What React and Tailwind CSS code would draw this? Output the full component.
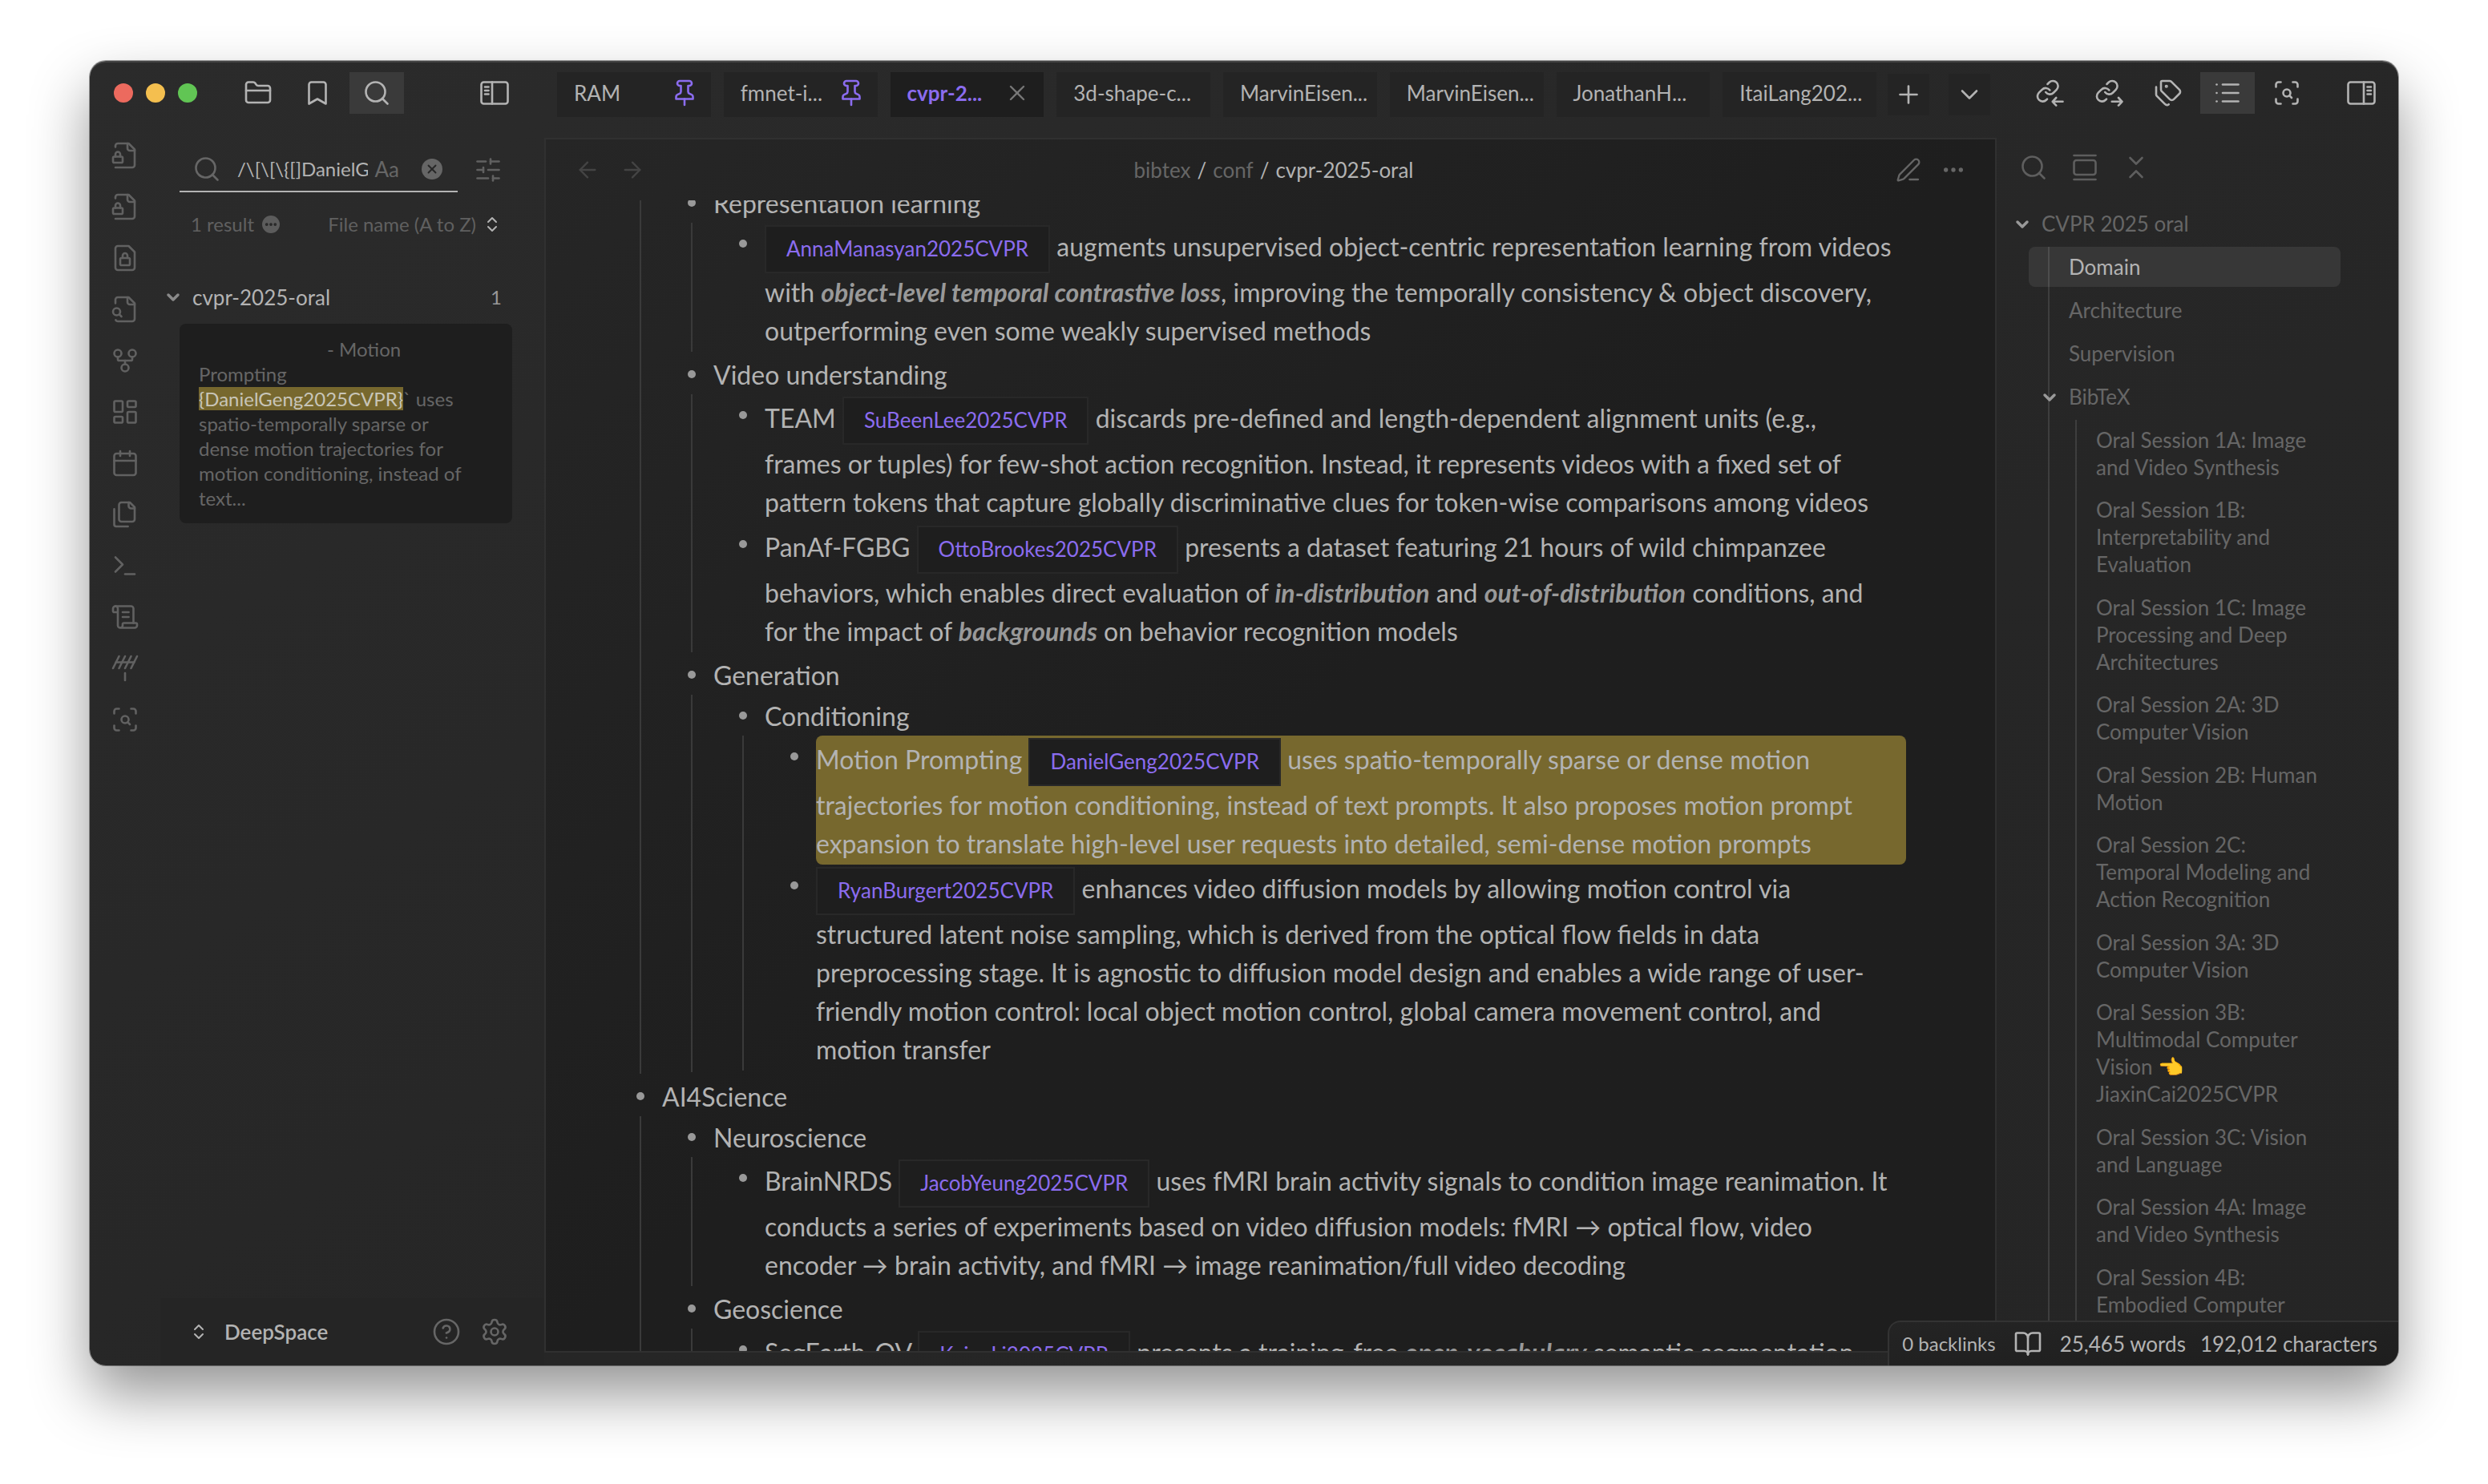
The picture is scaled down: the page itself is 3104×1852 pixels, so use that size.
import React from "react";
import {
  Antenna,
  ArrowLeft,
  ArrowRight,
  BookOpen,
  Calendar,
  ChevronDown,
  ChevronsDownUp,
  ChevronsUpDown,
  CircleQuestionMark,
  Ellipsis,
  FolderClosed,
  GalleryVertical,
  GitFork,
  LayoutDashboard,
  List,
  PenLine,
  Plus,
  ScanSearch,
  ScrollText,
  Search,
  Settings,
  SlidersHorizontal,
  Tags,
  Terminal,
  X,
} from "lucide-react";

function Glyph({ className = "size-9", children }) {
  return (
    <svg
      viewBox="0 0 24 24"
      fill="none"
      stroke="currentColor"
      strokeWidth="1.75"
      strokeLinecap="round"
      strokeLinejoin="round"
      className={className}
      aria-hidden="true"
    >
      {children}
    </svg>
  );
}

const FileLockCorner = () => (
  <Glyph>
    <path d="M4 5V4a2 2 0 0 1 2-2h9l5 5v13a2 2 0 0 1-2 2H4" />
    <path d="M14 2v4a2 2 0 0 0 2 2h4" />
    <rect width="8" height="5" x="2" y="13" rx="1" />
    <path d="M8 13v-2a2 2 0 1 0-4 0v2" />
  </Glyph>
);

const FileLockCenter = () => (
  <Glyph>
    <path d="M15 2H6a2 2 0 0 0-2 2v16a2 2 0 0 0 2 2h12a2 2 0 0 0 2-2V7Z" />
    <rect width="8" height="6" x="8" y="12" rx="1" />
    <path d="M10 12v-2a2 2 0 1 1 4 0v2" />
  </Glyph>
);

const FileSearchCorner = () => (
  <Glyph>
    <path d="M14 2v4a2 2 0 0 0 2 2h4" />
    <path d="M4.268 21a2 2 0 0 0 1.727 1H18a2 2 0 0 0 2-2V7l-5-5H6a2 2 0 0 0-2 2v3" />
    <path d="m9 18-1.5-1.5" />
    <circle cx="5" cy="14" r="3" />
  </Glyph>
);

const FilesStack = () => (
  <Glyph>
    <path d="M20 7h-3a2 2 0 0 1-2-2V2" />
    <path d="M9 18a2 2 0 0 1-2-2V4a2 2 0 0 1 2-2h7l4 4v10a2 2 0 0 1-2 2Z" />
    <path d="M3 7.6v12.8A1.6 1.6 0 0 0 4.6 22h9.8" />
  </Glyph>
);

const BookmarkFlag = () => (
  <Glyph>
    <path d="m19 21-7-4-7 4V5a2 2 0 0 1 2-2h10a2 2 0 0 1 2 2v16z" />
  </Glyph>
);

const PinMark = () => (
  <Glyph>
    <path d="M12 17v5" />
    <path d="M5 17h14v-1.76a2 2 0 0 0-1.11-1.79l-1.78-.9A2 2 0 0 1 15 10.76V6h1a2 2 0 0 0 0-4H8a2 2 0 0 0 0 4h1v4.76a2 2 0 0 1-1.11 1.79l-1.78.9A2 2 0 0 0 5 15.24Z" />
  </Glyph>
);

const SidebarMark = ({ right = false }) => (
  <Glyph className={right ? "size-9 -scale-x-100" : "size-9"}>
    <rect x="1" y="3" width="22" height="18" rx="2" />
    <path d="M10 3v18M4 7h3M4 10h3M4 13h3" />
  </Glyph>
);

const LinkMark = ({ out = false }) => (
  <Glyph>
    <g transform="translate(.2 .2) scale(.86)" strokeWidth="2">
      <path d="M10 13a5 5 0 0 0 7.54.54l3-3a5 5 0 0 0-7.07-7.07l-1.72 1.71" />
      <path d="M14 11a5 5 0 0 0-7.54-.54l-3 3a5 5 0 0 0 7.07 7.07l.9-.9" />
    </g>
    {out ? <path d="M14.5 19.2H23M20 16l3 3.2-3 3.2" /> : <path d="M14.5 19.2H23M17.5 16l-3 3.2 3 3.2" />}
  </Glyph>
);

const icon = { className: "size-9", strokeWidth: 1.75 };

function IconButton({ label, active = false, className = "", children }) {
  return (
    <button
      type="button"
      aria-label={label}
      className={`flex h-[52px] w-[68px] shrink-0 items-center justify-center ${active ? "bg-[#3a3a3a]" : ""} ${className}`}
    >
      {children}
    </button>
  );
}

/* ---------- left side ---------- */

const ribbon = [
  ["Encrypt note", FileLockCorner],
  ["Decrypt note", FileLockCorner],
  ["Lock file", FileLockCenter],
  ["Quick switcher", FileSearchCorner],
  ["Graph view", () => <GitFork {...icon} />],
  ["Canvas", () => <LayoutDashboard {...icon} />],
  ["Daily note", () => <Calendar {...icon} />],
  ["Templates", FilesStack],
  ["Command palette", () => <Terminal {...icon} />],
  ["Bibliography", () => <ScrollText {...icon} />],
  ["Publish", () => <Antenna {...icon} />],
  ["Scan", () => <ScanSearch {...icon} />],
];

function LeftSide() {
  return (
    <aside className="flex w-[567px] shrink-0 flex-col">
      <div className="flex h-[96px] shrink-0 items-start pt-[14px] pr-[44px] pl-[30px]">
        <div className="flex h-[52px] items-center gap-4">
          <span className="size-6 rounded-full bg-[#ec6a5e]" />
          <span className="size-6 rounded-full bg-[#f4bf4f]" />
          <span className="size-6 rounded-full bg-[#61c554]" />
        </div>
        <div className="ml-[42px] flex gap-[6px]">
          <IconButton label="Files"><FolderClosed {...icon} /></IconButton>
          <IconButton label="Bookmarks"><BookmarkFlag /></IconButton>
          <IconButton label="Search" active><Search {...icon} /></IconButton>
        </div>
        <button type="button" aria-label="Collapse left sidebar" className="ml-auto flex h-[52px] items-center">
          <SidebarMark />
        </button>
      </div>

      <div className="flex min-h-0 flex-1">
        <nav className="flex w-[88px] shrink-0 flex-col items-center gap-7 pt-1 text-[#616161]">
          {ribbon.map(([label, Icon], i) => (
            <button key={i} type="button" aria-label={label}><Icon /></button>
          ))}
        </nav>

        <div className="flex min-w-0 flex-1 flex-col">
          <div className="flex items-center gap-5 pt-3 pr-[52px] pl-6">
            <label className="flex h-14 min-w-0 flex-1 items-center border-b-2 border-[#b3b3b3] pr-[19px] pl-4">
              <Search className="size-9 shrink-0 text-[#666]" strokeWidth={1.75} />
              <input
                aria-label="Search notes"
                defaultValue={"/\\[\\[\\{[]DanielGeng2025CVPR"}
                className="ml-5 min-w-0 flex-1 bg-transparent text-2xl outline-none"
              />
              <span className="ml-2 text-[26px] leading-[34px] text-[#666]">Aa</span>
              <button type="button" aria-label="Clear search" className="ml-7 flex size-[26px] shrink-0 items-center justify-center rounded-full bg-[#666] text-[#282828]">
                <X className="size-[18px]" strokeWidth={2.5} />
              </button>
            </label>
            <button type="button" aria-label="Search settings" className="text-[#616161]"><SlidersHorizontal {...icon} /></button>
          </div>

          <div className="mt-6 flex h-8 items-center pr-[53px] pl-[38px] text-2xl text-[#606060]">
            <span>1 result</span>
            <span className="ml-[10px] flex size-[22px] items-center justify-center rounded-full bg-[#5c5c5c] text-[#262626]">
              <Ellipsis className="size-[18px]" strokeWidth={3} />
            </span>
            <button type="button" className="ml-auto flex items-center gap-2">
              File name (A to Z)
              <ChevronsUpDown className="size-6 text-[#b3b3b3]" strokeWidth={2} />
            </button>
          </div>

          <button type="button" className="mt-[58px] flex h-[34px] items-center pr-[53px] pl-1 text-left text-[26px]">
            <ChevronDown className="size-6 text-[#8a8a8a]" strokeWidth={3.5} />
            <span className="ml-3">cvpr-2025-oral</span>
            <span className="ml-auto text-2xl text-[#999]">1</span>
          </button>

          <p className="mt-4 mr-10 ml-6 rounded-lg bg-[#1e1e1e] px-6 py-4 text-2xl leading-[31px] text-[#666]">
            <span className="ml-[160px]">- Motion</span>
            <br />
            Prompting
            <br />
            <mark className="bg-[#77682e] text-[#c8c5b8]">{"{DanielGeng2025CVPR}"}</mark>
            ` uses
            <br />
            spatio-temporally sparse or
            <br />
            dense motion trajectories for
            <br />
            motion conditioning, instead of
            <br />
            text...
          </p>

          <div className="mt-auto flex h-[84px] items-center bg-[#252525] pr-[44px] pl-9">
            <button type="button" className="flex items-center gap-5 text-[26px] font-semibold">
              <ChevronsUpDown className="size-6" strokeWidth={2} />
              DeepSpace
            </button>
            <button type="button" aria-label="Help" className="ml-auto text-[#666]"><CircleQuestionMark {...icon} /></button>
            <button type="button" aria-label="Settings" className="ml-6 text-[#666]"><Settings {...icon} /></button>
          </div>
        </div>
      </div>
    </aside>
  );
}

/* ---------- editor ---------- */

const tabs = [
  { title: "RAM", pinned: true },
  { title: "fmnet-i...", pinned: true },
  { title: "cvpr-2...", active: true },
  { title: "3d-shape-c..." },
  { title: "MarvinEisen..." },
  { title: "MarvinEisen..." },
  { title: "JonathanH..." },
  { title: "ItaiLang202..." },
];

function Tab({ title, pinned, active }) {
  return (
    <div
      className={`flex h-14 min-w-0 flex-1 items-center justify-between pr-[15px] pb-1 pl-[21px] text-[26px] whitespace-nowrap ${
        active ? "bg-[#1e1e1e] font-bold text-[#8b6cef]" : "bg-[#242424]"
      }`}
    >
      <button type="button">{title}</button>
      {pinned && <span className="text-[#8b6cef]"><PinMark /></span>}
      {active && (
        <button type="button" aria-label="Close tab" className="mr-[2px] text-[#777]"><X className="size-8" strokeWidth={1.75} /></button>
      )}
    </div>
  );
}

function Cite({ children }) {
  return (
    <a
      href="#cite"
      className="inline-block h-[60px] border-2 border-[#282828] bg-[#1e1e1e] px-[25px] pt-[9px] text-[26px] leading-9 text-[#8b6cef]"
    >
      {children}
    </a>
  );
}

const Em = ({ children }) => <em className="font-bold text-[#999]">{children}</em>;

function Item({ text, mark = false, children }) {
  return (
    <li className={children ? "pb-[2px]" : ""}>
      <div className="flex gap-[22px]">
        <span className="mt-[21px] size-[10px] shrink-0 rounded-full bg-[#999]" />
        <div
          className={`min-w-0 flex-1 pt-[3px] ${children ? "" : "pb-[2px]"} ${mark ? "rounded-lg bg-[#77682e]" : ""}`}
        >
          {text}
        </div>
      </div>
      {children && <Nested>{children}</Nested>}
    </li>
  );
}

const Nested = ({ children }) => <ul className="ml-1 border-l-2 border-[#3a3a3a] pl-[58px]">{children}</ul>;

function Note() {
  return (
    <article className="min-h-0 flex-1 overflow-hidden pr-[111px] pl-[113px] text-[32px] leading-[48px]">
      <ul className="-mt-[23px]">
        <li className="pb-[2px]">
          <Nested>
            <Item text="Representation learning">
              <Item
                text={
                  <>
                    <Cite>AnnaManasyan2025CVPR</Cite> augments unsupervised object-centric representation learning from videos
                    <br />
                    with <Em>object-level temporal contrastive loss</Em>, improving the temporally consistency &amp; object discovery,
                    <br />
                    outperforming even some weakly supervised methods
                  </>
                }
              />
            </Item>
            <Item text="Video understanding">
              <Item
                text={
                  <>
                    TEAM <Cite>SuBeenLee2025CVPR</Cite> discards pre-defined and length-dependent alignment units (e.g.,
                    <br />
                    frames or tuples) for few-shot action recognition. Instead, it represents videos with a fixed set of
                    <br />
                    pattern tokens that capture globally discriminative clues for token-wise comparisons among videos
                  </>
                }
              />
              <Item
                text={
                  <>
                    PanAf-FGBG <Cite>OttoBrookes2025CVPR</Cite> presents a dataset featuring 21 hours of wild chimpanzee
                    <br />
                    behaviors, which enables direct evaluation of <Em>in-distribution</Em> and <Em>out-of-distribution</Em> conditions, and
                    <br />
                    for the impact of <Em>backgrounds</Em> on behavior recognition models
                  </>
                }
              />
            </Item>
            <Item text="Generation">
              <Item text="Conditioning">
                <Item
                  mark
                  text={
                    <>
                      Motion Prompting <Cite>DanielGeng2025CVPR</Cite> uses spatio-temporally sparse or dense motion
                      <br />
                      trajectories for motion conditioning, instead of text prompts. It also proposes motion prompt
                      <br />
                      expansion to translate high-level user requests into detailed, semi-dense motion prompts
                    </>
                  }
                />
                <Item
                  text={
                    <>
                      <Cite>RyanBurgert2025CVPR</Cite> enhances video diffusion models by allowing motion control via
                      <br />
                      structured latent noise sampling, which is derived from the optical flow fields in data
                      <br />
                      preprocessing stage. It is agnostic to diffusion model design and enables a wide range of user-
                      <br />
                      friendly motion control: local object motion control, global camera movement control, and
                      <br />
                      motion transfer
                    </>
                  }
                />
              </Item>
            </Item>
          </Nested>
        </li>
        <Item text="AI4Science">
          <Item text="Neuroscience">
            <Item
              text={
                <>
                  BrainNRDS <Cite>JacobYeung2025CVPR</Cite> uses fMRI brain activity signals to condition image reanimation. It
                  <br />
                  conducts a series of experiments based on video diffusion models: fMRI → optical flow, video
                  <br />
                  encoder → brain activity, and fMRI → image reanimation/full video decoding
                </>
              }
            />
          </Item>
          <Item text="Geoscience">
            <Item
              text={
                <>
                  SegEarth-OV <Cite>KaiyuLi2025CVPR</Cite> presents a training-free <Em>open-vocabulary</Em> semantic segmentation
                </>
              }
            />
          </Item>
        </Item>
      </ul>
    </article>
  );
}

function Editor() {
  return (
    <div className="flex min-w-0 flex-1 flex-col">
      <div className="flex h-[96px] shrink-0 items-start pt-[14px] pr-2 pl-4">
        <div className="flex min-w-0 flex-1 gap-4">
          {tabs.map((t, i) => <Tab key={i} {...t} />)}
        </div>
        <button type="button" aria-label="New tab" className="mt-[2px] ml-[14px] flex size-[52px] items-center justify-center bg-[#242424]">
          <Plus {...icon} />
        </button>
        <button type="button" aria-label="Tab list" className="mt-[2px] ml-6 flex size-[52px] items-center justify-center bg-[#242424]">
          <ChevronDown {...icon} />
        </button>
      </div>

      <main className="mb-4 flex min-h-0 flex-1 flex-col border-2 border-[#303030] bg-linear-to-br from-[#262626] via-[#1e1e1e] via-50% to-[#1e1e1e]">
        <header className="flex h-[76px] shrink-0 items-center px-9">
          <div className="flex flex-1 gap-6 text-[#444]">
            <button type="button" aria-label="Back"><ArrowLeft className="size-8" strokeWidth={1.75} /></button>
            <button type="button" aria-label="Forward"><ArrowRight className="size-8" strokeWidth={1.75} /></button>
          </div>
          <div className="flex gap-2 pl-2 text-[26px]">
            <a href="#bibtex" className="text-[#666]">bibtex</a>
            <span>/</span>
            <a href="#conf" className="text-[#666]">conf</a>
            <span>/</span>
            <span>cvpr-2025-oral</span>
          </div>
          <div className="flex flex-1 items-center justify-end gap-6 text-[#666]">
            <button type="button" aria-label="Edit"><PenLine className="size-8" strokeWidth={1.75} /></button>
            <button type="button" aria-label="More options"><Ellipsis className="size-8" strokeWidth={2} /></button>
          </div>
        </header>
        <Note />
      </main>
    </div>
  );
}

/* ---------- outline ---------- */

const sessions = [
  "Oral Session 1A: Image and Video Synthesis",
  "Oral Session 1B: Interpretability and Evaluation",
  "Oral Session 1C: Image Processing and Deep Architectures",
  "Oral Session 2A: 3D Computer Vision",
  "Oral Session 2B: Human Motion",
  "Oral Session 2C: Temporal Modeling and Action Recognition",
  "Oral Session 3A: 3D Computer Vision",
  "Oral Session 3B: Multimodal Computer Vision 👈 JiaxinCai2025CVPR",
  "Oral Session 3C: Vision and Language",
  "Oral Session 4A: Image and Video Synthesis",
  "Oral Session 4B: Embodied Computer",
];

function Heading({ text, open = false, active = false, tight = false, children }) {
  return (
    <li>
      <div
        className={`-ml-[26px] flex rounded-lg py-2 pr-6 ${tight ? "mb-[3px]" : "mb-1"} ${open ? "pl-[14px]" : "pl-[50px]"} ${
          active ? "bg-white/8 text-[#b3b3b3]" : ""
        }`}
      >
        {open && <ChevronDown className="mt-[6px] mr-3 size-6 shrink-0 text-[#999]" strokeWidth={3.5} />}
        <a href="#heading">{text}</a>
      </div>
      {children && <ul className="ml-8 border-l-2 border-[#3e3e3e]">{children}</ul>}
    </li>
  );
}

function RightSide() {
  return (
    <aside className="flex w-[501px] shrink-0 flex-col overflow-hidden">
      <div className="flex h-[96px] shrink-0 items-start gap-[6px] pt-[14px] pr-7 pl-8">
        <IconButton label="Backlinks"><LinkMark /></IconButton>
        <IconButton label="Outgoing links"><LinkMark out /></IconButton>
        <IconButton label="Tags"><Tags {...icon} /></IconButton>
        <IconButton label="Outline" active><List {...icon} /></IconButton>
        <IconButton label="Scan"><ScanSearch {...icon} /></IconButton>
        <button type="button" aria-label="Collapse right sidebar" className="ml-auto flex h-[52px] items-center">
          <SidebarMark right />
        </button>
      </div>
      <div className="flex shrink-0 gap-7 pt-[19px] pl-7 text-[#5e5e5e]">
        <button type="button" aria-label="Search outline"><Search {...icon} /></button>
        <button type="button" aria-label="Follow cursor"><GalleryVertical {...icon} /></button>
        <button type="button" aria-label="Collapse all"><ChevronsDownUp {...icon} /></button>
      </div>
      <ul className="mt-[27px] mr-[72px] ml-8 min-h-0 flex-1 text-[26px] leading-[34px] text-[#666]">
        <Heading text="CVPR 2025 oral" open>
          <Heading text="Domain" active />
          <Heading text="Architecture" />
          <Heading text="Supervision" />
          <Heading text="BibTeX" open>
            {sessions.map((s, i) => <Heading key={s} text={s} tight={i % 2 === 0} />)}
          </Heading>
        </Heading>
      </ul>
    </aside>
  );
}

export default function App() {
  return (
    <div className="flex h-screen bg-white px-[112px] pt-[76px] pb-[148px] font-['Lato','Inter',sans-serif] text-[#b3b3b3]">
      <div className="relative flex min-w-0 flex-1 overflow-hidden rounded-[20px] bg-linear-to-br from-[#2b2b2b] via-[#262626] via-60% to-[#252525] shadow-[0_0_0_1px_rgba(0,0,0,0.35),inset_0_2px_0_rgba(255,255,255,0.12),0_36px_72px_rgba(0,0,0,0.42)]">
        <LeftSide />
        <Editor />
        <RightSide />
        <footer className="absolute right-0 bottom-0 flex h-[56px] items-center rounded-tl-2xl border-t-2 border-l-2 border-[#333] bg-linear-to-br from-[#242424] to-[#1e1e1e] pr-[26px] pl-4">
          <span className="text-2xl">0 backlinks</span>
          <BookOpen className="mx-[22px] size-9" strokeWidth={1.75} />
          <span className="text-[26px]">25,465 words</span>
          <span className="ml-[18px] text-[26px]">192,012 characters</span>
        </footer>
      </div>
    </div>
  );
}
